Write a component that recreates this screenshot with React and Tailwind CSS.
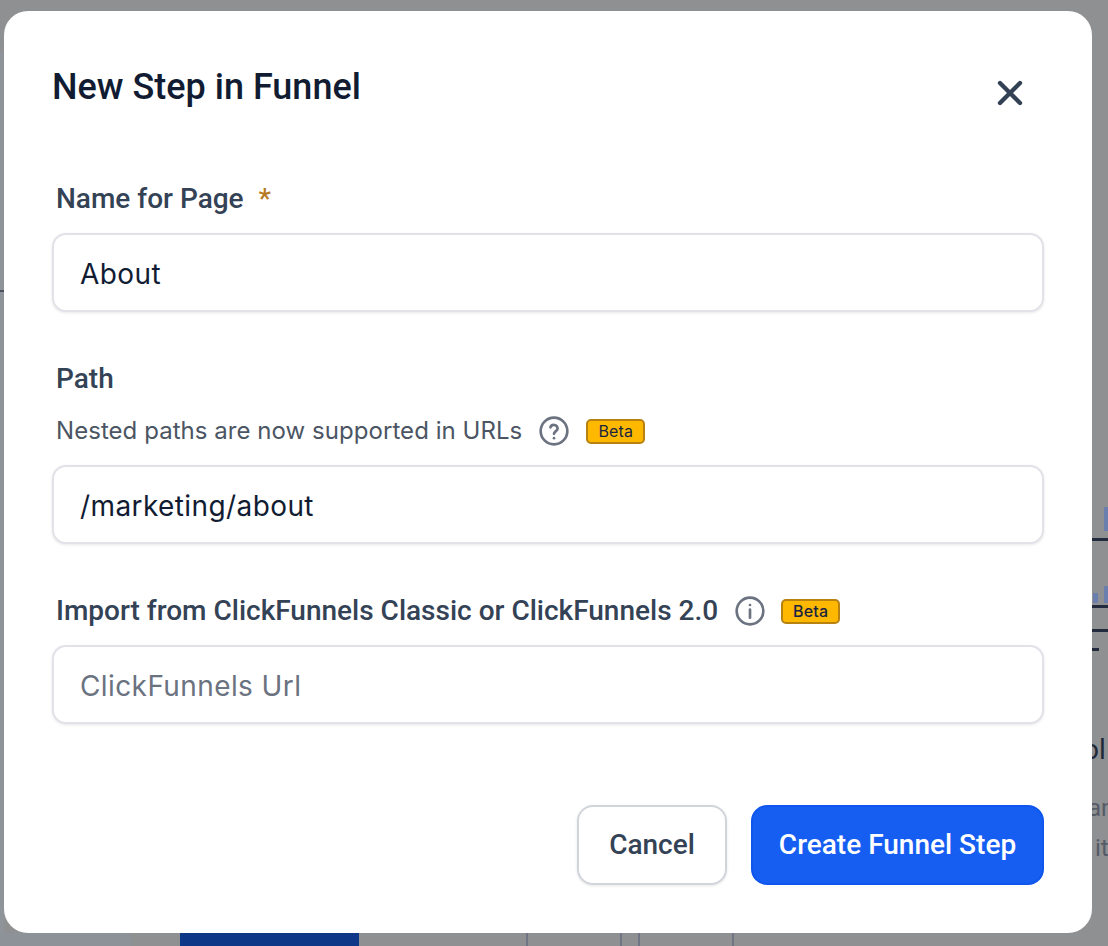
import React from "react";
import { X } from "lucide-react";

function Beta() {
  return (
    <span className="flex h-[25px] w-[59px] items-center justify-center rounded-[5px] border-2 border-[#b88210] bg-[#ffb800] font-['Inter',sans-serif] text-[16px] leading-none tracking-[0.2px] text-[#1a2540]">
      Beta
    </span>
  );
}

function Field({ value, placeholder }) {
  return (
    <input
      readOnly
      value={value}
      placeholder={placeholder}
      className="block h-[79px] w-[992px] rounded-[14px] border-2 border-[#e2e3e9] bg-white px-[26px] pt-[2px] font-['Inter',sans-serif] text-[28px] tracking-[0.4px] text-[#111c33] shadow-[0_1px_3px_rgba(16,24,40,0.1)] outline-none placeholder:text-[#6b7280]"
    />
  );
}

// page behind the modal, only slivers of it show around the edges
function Backdrop() {
  return (
    <div className="absolute inset-0 flex flex-col overflow-hidden bg-[#8f9092]">
      <div className="flex flex-1 justify-between">
        <div className="w-[4px] pt-[52px]">
          <div className="h-[238px] bg-[#8f949b]" />
          <div className="h-[2px] bg-[#4a5160]" />
          <div className="h-[641px] bg-[#8f949b]" />
        </div>
        <div className="flex w-[16px] flex-col">
          <div className="mt-[507px] h-[24px] w-[4px] self-end bg-[#6b7fae]" />
          <div className="mt-[7px] h-[3px] bg-[#222b3d]" />
          <div className="mt-[45px] flex h-[17px] items-end justify-between pl-[1px]">
            <div className="h-[10px] w-[5px] bg-[#6b7fae]" />
            <div className="h-[17px] w-[4px] bg-[#6b7fae]" />
          </div>
          <div className="mt-[2px] h-[3px] bg-[#222b3d]" />
          <div className="mt-[21px] h-[3px] bg-[#222b3d]" />
          <div className="mt-[16px] h-[3px] w-[7px] bg-[#222b3d]" />
          <span className="-ml-[9px] mt-[82px] whitespace-nowrap text-[28px] leading-[34px] text-[#1f2937]">ol</span>
          <span className="-ml-[4px] mt-[26px] whitespace-nowrap text-[24px] leading-[30px] text-[#555b66]">an</span>
          <span className="ml-[3px] mt-[10px] whitespace-nowrap text-[24px] leading-[30px] text-[#555b66]">it</span>
        </div>
      </div>
      <div className="flex h-[13px]">
        <div className="w-[132px] bg-[#8d9299]" />
        <div className="ml-[48px] w-[179px] bg-[#0e3788]" />
        <div className="ml-[167px] w-[96px] border-x-2 border-[#6f7584]" />
        <div className="ml-[16px] w-[96px] border-x-2 border-[#6f7584]" />
      </div>
    </div>
  );
}

export default function App() {
  return (
    <div className="relative h-[946px] w-[1108px] overflow-hidden font-['Roboto',sans-serif]">
      <Backdrop />
      <div className="relative pl-[4px] pt-[11px]">
        <div className="h-[922px] w-[1088px] rounded-[24px] bg-white pl-[48px] pt-[52px]">
          <div className="flex h-[48px] w-[992px] items-start justify-between">
            <h1 className="text-[36px] font-medium leading-[48px] text-[#111c33]">New Step in Funnel</h1>
            <button className="mr-[14px] mt-[10px] text-[#334155]">
              <X size={40} strokeWidth={2.6} />
            </button>
          </div>

          <div className="mt-[70px] pl-[4px] text-[28px] font-medium leading-[36px] text-[#344256]">
            Name for Page <span className="ml-[8px] text-[#b7791f]">*</span>
          </div>
          <div className="mt-[16px]">
            <Field value="About" />
          </div>

          <div className="mt-[49px] pl-[4px] text-[28px] font-medium leading-[36px] text-[#344256]">Path</div>
          <div className="mt-[18px] flex h-[32px] items-center pl-[4px] font-['Inter',sans-serif] text-[24px] tracking-[0.05px] text-[#4b5563]">
            <span>Nested paths are now supported in URLs</span>
            <svg className="ml-[16px]" width="32" height="32" viewBox="0 0 24 24" fill="none" stroke="#6b7280" strokeWidth="2" strokeLinecap="round">
              <circle cx="12" cy="12" r="10" />
              <path d="M9.3 9.2a2.8 2.8 0 0 1 5.4.9c0 1.9-2.7 2.4-2.7 4" />
              <path d="M12 17.4h.01" />
            </svg>
            <span className="ml-[16px]">
              <Beta />
            </span>
          </div>
          <div className="mt-[18px]">
            <Field value="/marketing/about" />
          </div>

          <div className="mt-[49px] flex h-[36px] items-center pl-[4px] text-[28px] font-medium text-[#344256]">
            <span>Import from ClickFunnels Classic or ClickFunnels 2.0</span>
            <svg className="ml-[16px]" width="32" height="32" viewBox="0 0 24 24" fill="none" stroke="#6b7280" strokeWidth="2" strokeLinecap="round">
              <circle cx="12" cy="12" r="10" />
              <path d="M12 11v6" />
              <path d="M12 7.5h.01" />
            </svg>
            <span className="ml-[15px]">
              <Beta />
            </span>
          </div>
          <div className="mt-[16px]">
            <Field placeholder="ClickFunnels Url" />
          </div>

          <div className="mt-[81px] flex w-[992px] justify-end gap-[24px]">
            <button className="h-[80px] w-[150px] rounded-[16px] border-2 border-[#d1d5db] bg-white text-[28px] font-medium text-[#344256] shadow-[0_1px_3px_rgba(16,24,40,0.1)]">
              Cancel
            </button>
            <button className="h-[80px] w-[293px] rounded-[16px] border-2 border-[#0f56ee] bg-[#165ef2] text-[28px] font-medium text-white">
              Create Funnel Step
            </button>
          </div>
        </div>
      </div>
    </div>
  );
}
